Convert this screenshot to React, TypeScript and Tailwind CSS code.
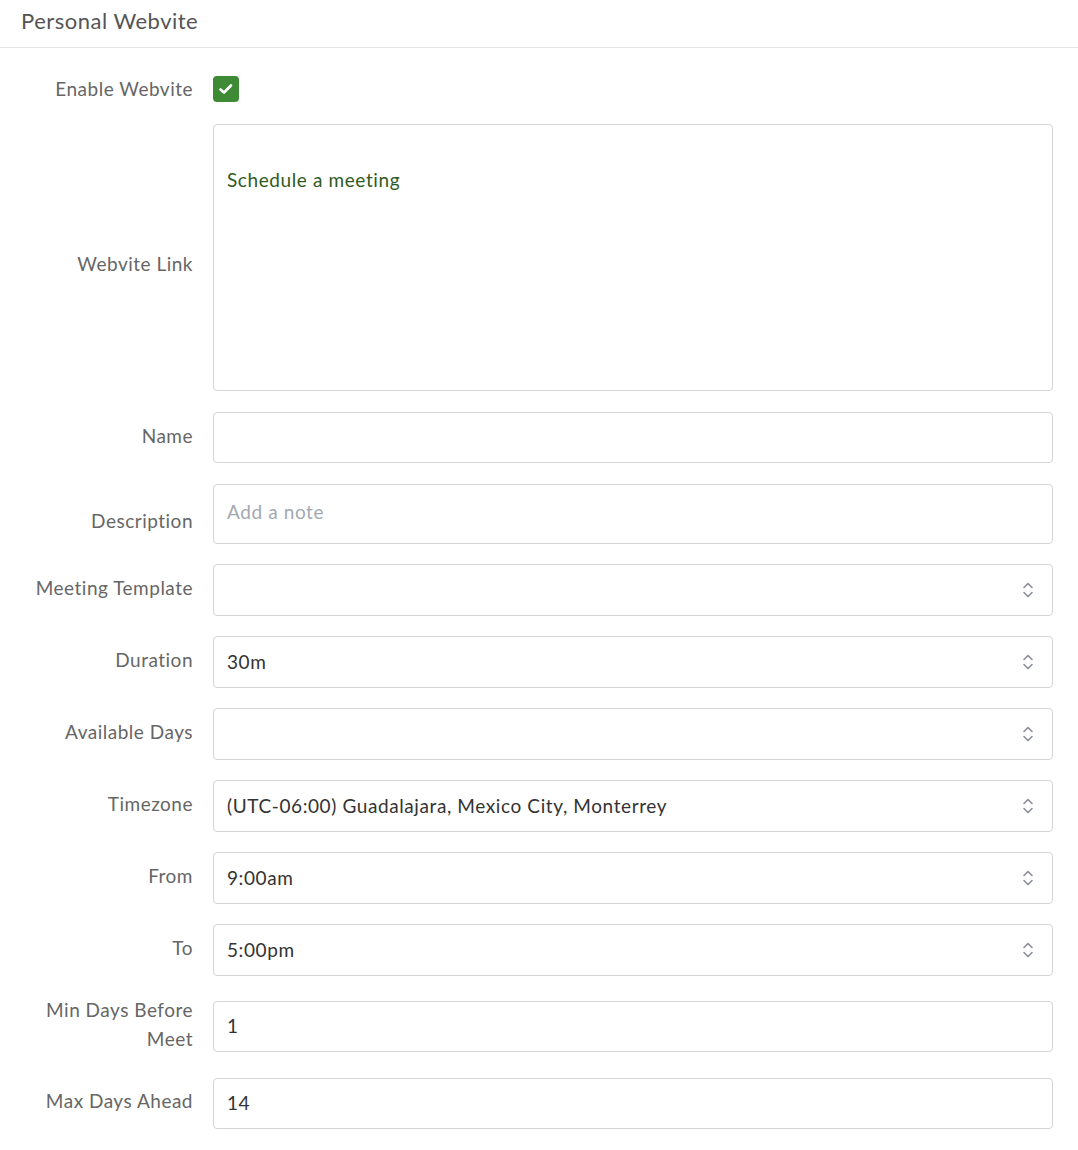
import React from 'react';

const Chevrons = () => (
    <svg width="12" height="18" viewBox="0 0 12 18" fill="none" stroke="#8a8f98" strokeWidth="1.6" strokeLinecap="round" strokeLinejoin="round">
        <path d="M2 6.5 L6 2.5 L10 6.5" />
        <path d="M2 11.5 L6 15.5 L10 11.5" />
    </svg>
);

const Row = ({ label, children, className = '', labelClass = '-mt-[6px]' }: { label: React.ReactNode; children: React.ReactNode; className?: string; labelClass?: string }) => (
    <div className={`flex items-center gap-5 ${className}`}>
        <div className={`w-[193px] shrink-0 text-right text-[19px] leading-[29px] tracking-[0.5px] text-[#666] ${labelClass}`}>{label}</div>
        <div className="flex-1">{children}</div>
    </div>
);

const TextBox = ({ value }: { value?: string }) => (
    <div className="h-[51px] w-[840px] rounded-[4px] border border-[#d3d5d8] bg-white px-[13px] flex items-center text-[19px] tracking-[0.6px] text-[#333]">
        {value}
    </div>
);

const SelectBox = ({ value }: { value?: string }) => (
    <div className="h-[52px] w-[840px] rounded-[4px] border border-[#d3d5d8] bg-white pl-[13px] pr-[18px] flex items-center justify-between text-[19px] tracking-[0.6px] text-[#333]">
        <span>{value}</span>
        <Chevrons />
    </div>
);

export default function App() {
    return (
        <div className="w-[1078px] h-[1150px] bg-white" style={{ fontFamily: '"Lato", "Open Sans", sans-serif' }}>
            {/* Header */}
            <header className="h-[48px] border-b border-[#e5e5e5] pl-[21px] flex items-center">
                <h1 className="text-[22px] tracking-[0.5px] text-[#555] -mt-[6px]">Personal Webvite</h1>
            </header>

            <div className="pt-[26px]">
                <Row label="Enable Webvite" labelClass="">
                    <div className="w-[26px] h-[26px] rounded-[4px] bg-[#3e8a35] flex items-center justify-center">
                        <svg width="16" height="16" viewBox="0 0 16 16" fill="none" stroke="white" strokeWidth="2.6" strokeLinecap="round" strokeLinejoin="round">
                            <path d="M2.5 8.5 L6 11.5 L13 4.5" />
                        </svg>
                    </div>
                </Row>

                <Row label="Webvite Link" className="mt-[21px]" labelClass="mt-[12px]">
                    <div className="h-[267px] w-[840px] rounded-[4px] border border-[#d3d5d8] bg-white px-[13px] pt-[41px] text-[19px] tracking-[0.6px] text-[#2f5a23]">
                        Schedule a meeting
                    </div>
                </Row>

                <Row label="Name" className="mt-[21px]" labelClass="-mt-[4px]">
                    <TextBox />
                </Row>

                <Row label="Description" className="mt-[21px]" labelClass="mt-[12px]">
                    <div className="h-[60px] w-[840px] rounded-[4px] border border-[#d3d5d8] bg-white px-[13px] pt-[13px] text-[19px] tracking-[0.6px] text-[#a3a8b0]">
                        Add a note
                    </div>
                </Row>

                <Row label="Meeting Template" className="mt-[20px]">
                    <SelectBox />
                </Row>
                <Row label="Duration" className="mt-[20px]">
                    <SelectBox value="30m" />
                </Row>
                <Row label="Available Days" className="mt-[20px]">
                    <SelectBox />
                </Row>
                <Row label="Timezone" className="mt-[20px]">
                    <SelectBox value="(UTC-06:00) Guadalajara, Mexico City, Monterrey" />
                </Row>
                <Row label="From" className="mt-[20px]">
                    <SelectBox value="9:00am" />
                </Row>
                <Row label="To" className="mt-[20px]">
                    <SelectBox value="5:00pm" />
                </Row>

                <Row label={<>Min Days Before<br />Meet</>} className="mt-[23px]" labelClass="-mt-[4px]">
                    <TextBox value="1" />
                </Row>
                <Row label="Max Days Ahead" className="mt-[25px]">
                    <TextBox value="14" />
                </Row>
            </div>
        </div>
    );
}
